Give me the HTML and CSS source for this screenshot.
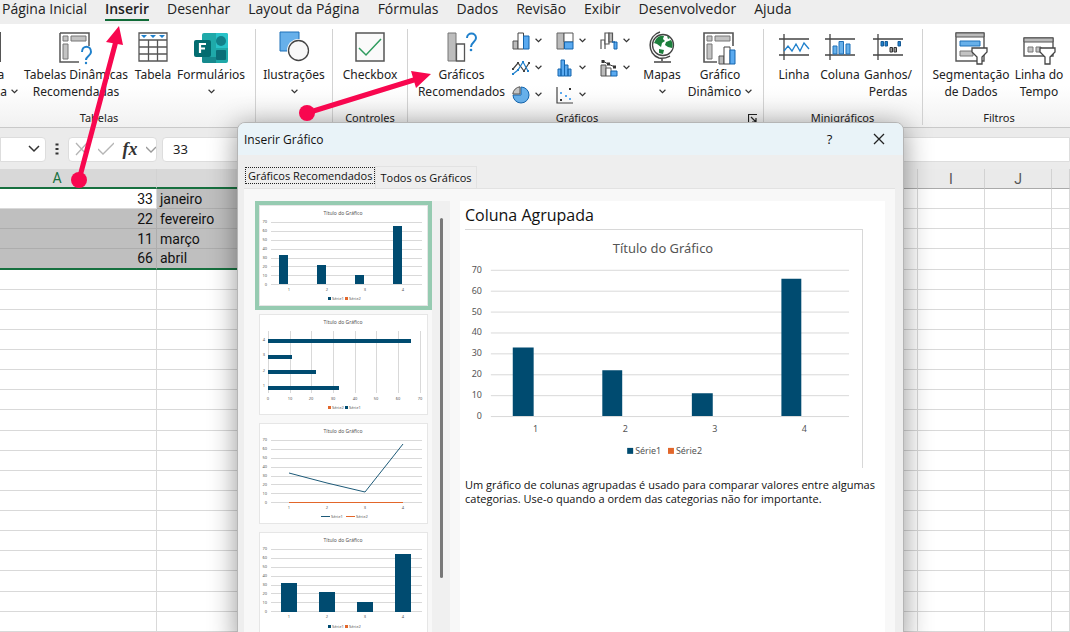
FILE: index.html
```html
<!DOCTYPE html>
<html lang="pt-BR">
<head>
<meta charset="utf-8">
<title>Inserir Gráfico</title>
<link rel="stylesheet" href="styles.css">
</head>
<body>
<div class="app">
  <nav class="tabs" aria-label="Guias">
    <button class="tab">Página Inicial</button>
    <button class="tab tab-active">Inserir</button>
    <button class="tab">Desenhar</button>
    <button class="tab">Layout da Página</button>
    <button class="tab">Fórmulas</button>
    <button class="tab">Dados</button>
    <button class="tab">Revisão</button>
    <button class="tab">Exibir</button>
    <button class="tab">Desenvolvedor</button>
    <button class="tab">Ajuda</button>
  </nav>

  <div class="ribbon">
    <section class="group group-tables">
      <div class="tools">
        <button class="tool">
          <svg class="icon" viewBox="0 0 30 30"><path d="M1 1h28v28H1z" fill="#fff" stroke="#555" stroke-width="2"/></svg>
          <span>Tabela</span><span>Dinâmica <svg class="chev" viewBox="0 0 6 4"><path d="M.5.5 3 3 5.500.5"/></svg></span>
        </button>
        <button class="tool">
          <svg class="icon icon-wide" viewBox="0 0 34 32"><path d="M1 1h29v13M20 30H1V1" fill="none" stroke="#555" stroke-width="1.500"/><path d="M4 4h5v5H4zM12 4h15v5H12zM4 12h5v15H4z" fill="#c3c3c3" stroke="#777"/><path d="M23 20c0-7 9-7 9 0 0 4-5 4-5 8" fill="none" stroke="#1f80cc" stroke-width="2"/><circle cx="27" cy="31" r="1.200" fill="#1f80cc"/></svg>
          <span>Tabelas Dinâmicas</span><span>Recomendadas</span>
        </button>
        <button class="tool">
          <svg class="icon" viewBox="0 0 30 30"><path d="M1 1h28v28H1z" fill="#fff"/><path d="M1 1h28v28H1zM1 8h28M1 15h28M1 22h28M10.500 8v21M19.500 8v21" fill="none" stroke="#555" stroke-width="1.300"/><path d="M3 3h6L6 6zM12 3h6l-3 3zM21 3h6l-3 3z" fill="#1f80cc"/></svg>
          <span>Tabela</span>
        </button>
        <button class="tool">
          <svg class="icon icon-wide" viewBox="0 0 34 30"><rect x="8" width="26" height="30" rx="2" fill="#1fa9a9"/><path d="M22 0h10a2 2 0 0 1 2 2v13H22z" fill="#28c3c9"/><circle cx="27" cy="8" r="5" fill="#12818a"/><rect x="22" y="17" width="10" height="10" rx="1" fill="#0b6e77"/><path d="M8 24h14v6H10a2 2 0 0 1-2-2z" fill="#16898d"/><rect y="7" width="17" height="17" rx="2" fill="#036c70"/><path d="M6 20v-9h6M6 15.500h5" fill="none" stroke="#fff" stroke-width="2.200"/></svg>
          <span>Formulários</span><span><svg class="chev" viewBox="0 0 6 4"><path d="M.5.5 3 3 5.500.5"/></svg></span>
        </button>
      </div>
      <div class="group-label">Tabelas</div>
    </section>

    <section class="group group-illus">
      <div class="tools">
        <button class="tool">
          <svg class="icon" viewBox="0 0 30 30"><path d="M1 0h19v19H1z" fill="#67b0ea" stroke="#1f70b8"/><circle cx="19.500" cy="18.500" r="11.500" fill="#fff"/><circle cx="19.500" cy="18.500" r="10" fill="#f8f8f8" stroke="#444" stroke-width="1.300"/></svg>
          <span>Ilustrações</span><span><svg class="chev" viewBox="0 0 6 4"><path d="M.5.5 3 3 5.500.5"/></svg></span>
        </button>
      </div>
    </section>

    <section class="group group-controls">
      <div class="tools">
        <button class="tool">
          <svg class="icon" viewBox="0 0 30 30"><path d="M1 1h28v28H1z" fill="#fafafa" stroke="#555" stroke-width="1.500"/><path d="m4 16 7 7L26 7" fill="none" stroke="#2f9b5e" stroke-width="1.500"/></svg>
          <span>Checkbox</span>
        </button>
      </div>
      <div class="group-label">Controles</div>
    </section>

    <section class="group group-charts">
      <div class="tools">
        <button class="tool">
          <svg class="icon" viewBox="0 0 30 30"><path d="M1 1h8v28H1z" fill="#bdbdbd" stroke="#777"/><path d="M9.500 12h8v17h-8z" fill="#fff" stroke="#555" stroke-width="1.300"/><path d="M20 6c0-6 9-6 9 0 0 4-5 4-5 9" fill="none" stroke="#1f80cc" stroke-width="2"/><circle cx="24" cy="18" r="1.300" fill="#1f80cc"/></svg>
          <span>Gráficos</span><span>Recomendados</span>
        </button>
        <div class="mini-grid">
          <button class="mini" aria-label="Colunas"><svg class="mini-icon" viewBox="0 0 18 18"><path d="M1 9h5v8H1z" fill="#bbb" stroke="#555"/><path d="M6 1h5.500v16H6z" fill="#fff" stroke="#444"/><path d="M11.500 4H17v13h-5.500z" fill="#5aaaf0" stroke="#1565ad"/></svg><svg class="chev" viewBox="0 0 6 4"><path d="M.5.5 3 3 5.500.5"/></svg></button>
          <button class="mini" aria-label="Hierarquia"><svg class="mini-icon" viewBox="0 0 18 18"><path d="M1 1h7v16H1z" fill="#bbb" stroke="#666"/><path d="M8 1h9v9H8z" fill="#fff" stroke="#555"/><path d="M8.500 10H17v7H8.500z" fill="#5aaaf0" stroke="#1565ad"/></svg><svg class="chev" viewBox="0 0 6 4"><path d="M.5.5 3 3 5.500.5"/></svg></button>
          <button class="mini" aria-label="Cascata"><svg class="mini-icon" viewBox="0 0 18 18"><path d="M1 17V8h4v9" fill="#fff" stroke="#555" stroke-width="1.200"/><path d="M5 1h4v11H5z" fill="#fff" stroke="#555" stroke-width="1.200"/><path d="M9 1h3.500v9H9z" fill="#bbb" stroke="#555" stroke-width="1.200"/><path d="M14 10h3v7h-3z" fill="#5aaaf0" stroke="#1565ad"/><path d="M12 10h3" stroke="#1565ad" stroke-width="1.500"/></svg><svg class="chev" viewBox="0 0 6 4"><path d="M.5.5 3 3 5.500.5"/></svg></button>
          <button class="mini" aria-label="Linhas"><svg class="mini-icon" viewBox="0 0 18 18"><path d="m1 10 5-6 6 8 5-8" fill="none" stroke="#444" stroke-width="1.200"/><path d="m1 15 5-4 5-8 5 9" fill="none" stroke="#1f80cc" stroke-width="1.200"/><path d="M0 9h2v2H0zM5 3h2v2H5zM11 11h2v2h-2zM16 3h2v2h-2z" fill="#444"/><path d="M0 14h2v2H0zM5 10h2v2H5zM10 2h2v2h-2zM15 11h2v2h-2z" fill="#1f80cc"/></svg><svg class="chev" viewBox="0 0 6 4"><path d="M.5.5 3 3 5.500.5"/></svg></button>
          <button class="mini" aria-label="Estatística"><svg class="mini-icon" viewBox="0 0 18 18"><path d="M2 10h3v7H2zM5 1h3.500v16H5zM8.500 6H12v11H8.500zM12 10h3v7h-3z" fill="#5aaaf0" stroke="#1565ad"/></svg><svg class="chev" viewBox="0 0 6 4"><path d="M.5.5 3 3 5.500.5"/></svg></button>
          <button class="mini" aria-label="Combinação"><svg class="mini-icon" viewBox="0 0 18 18"><path d="M1 6h5v11H1z" fill="#bbb" stroke="#555"/><path d="M6 9h5v8H6z" fill="#fff" stroke="#555"/><path d="M11 12h6v5h-6z" fill="#5aaaf0" stroke="#1565ad"/><path d="m3 2 5 3 7 3" fill="none" stroke="#333"/><path d="M1.500 1h3v3h-3zM7 3.500h3v3H7zM13 6.500h3v3h-3z" fill="#333"/></svg><svg class="chev" viewBox="0 0 6 4"><path d="M.5.5 3 3 5.500.5"/></svg></button>
          <button class="mini" aria-label="Pizza"><svg class="mini-icon" viewBox="0 0 18 18"><path d="M9 9V1a8 8 0 1 1-8 8z" fill="#67b0ea" stroke="#1565ad"/><path d="M8 8V.8A8 8 0 0 0 .8 8z" fill="#c5c5c5" stroke="#555"/></svg><svg class="chev" viewBox="0 0 6 4"><path d="M.5.5 3 3 5.500.5"/></svg></button>
          <button class="mini" aria-label="Dispersão"><svg class="mini-icon" viewBox="0 0 18 18"><path d="M1 1v16h16" fill="none" stroke="#444" stroke-width="1.200"/><path d="M13 2h2v2h-2zM4 13h2v2H4z" fill="#333"/><path d="M4 6h2v2H4zM9 9h2v2H9zM13 12h2v2h-2z" fill="#5aaaf0"/></svg><svg class="chev" viewBox="0 0 6 4"><path d="M.5.5 3 3 5.500.5"/></svg></button>
        </div>
        <button class="tool">
          <svg class="icon" viewBox="0 0 30 30"><circle cx="16" cy="13" r="10.500" fill="#fff" stroke="#444" stroke-width="1.300"/><path d="M9 7c2-3 6-4 8-3l-1 3 2 2-3 2-1 4-4-3-3-1zM19 10l5-2c2 3 2 6 1 8l-4-1-3-2zM12 17l5 1-1 4-4-1zM20 4l3 2-2 1z" fill="#1c7f3c"/><path d="M13 0C0 4 0 22 12 26c6 1 9-1 11-2M15 26v3M7 30h17" fill="none" stroke="#444" stroke-width="1.500"/></svg>
          <span>Mapas</span><span><svg class="chev" viewBox="0 0 6 4"><path d="M.5.5 3 3 5.500.5"/></svg></span>
        </button>
        <button class="tool">
          <svg class="icon icon-wide" viewBox="0 0 34 32"><path d="M30 14V1H1v29h13" fill="#fff" stroke="#555" stroke-width="1.600"/><path d="M4 4h5v5H4zM12 4h15v5H12zM4 12h5v15H4z" fill="#c3c3c3" stroke="#777"/><path d="M16 24h5v8h-5z" fill="#bbb" stroke="#555"/><path d="M21 15h6v17h-6z" fill="#fff" stroke="#444"/><path d="M27 18h5v14h-5z" fill="#5aaaf0" stroke="#1565ad"/></svg>
          <span>Gráfico</span><span>Dinâmico <svg class="chev" viewBox="0 0 6 4"><path d="M.5.5 3 3 5.500.5"/></svg></span>
        </button>
      </div>
      <div class="group-foot">
        <div class="group-label">Gráficos</div>
        <button class="launcher" aria-label="Mais gráficos"><svg viewBox="0 0 9 9"><path d="M.5 9V.5H9M3 3l5 5M8 4v4H4" fill="none" stroke="#222" stroke-width="1.200"/></svg></button>
      </div>
    </section>

    <section class="group group-spark">
      <div class="tools">
        <button class="tool">
          <svg class="icon" viewBox="0 0 30 30"><path d="M5 2v26M0 7h30M0 23h30" stroke="#444" stroke-width="1.300"/><path d="m5 19 4-5 4 5 4-7 4 7 4-8 5 6" fill="none" stroke="#1f80cc" stroke-width="1.300"/></svg>
          <span>Linha</span>
        </button>
        <button class="tool">
          <svg class="icon" viewBox="0 0 30 30"><path d="M5 2v26M0 7h30M0 23h30" stroke="#444" stroke-width="1.300"/><path d="M8 14h4v8H8zM14 9.500h4.500V22H14zM21 12h4v10h-4z" fill="#67b0ea" stroke="#1f70b8"/></svg>
          <span>Coluna</span>
        </button>
        <button class="tool">
          <svg class="icon" viewBox="0 0 30 30"><path d="M5 2v26M0 7h30M0 23h30" stroke="#444" stroke-width="1.300"/><path d="M8 9.500h2.500V14H8zM12 9.500h2.500V14H12zM25 9.500h2.500V14H25z" fill="#1f80cc" stroke="#165a96"/><path d="M17 15.500h2.500V20H17zM21 15.500h2.500V20H21z" fill="#999" stroke="#333"/></svg>
          <span>Ganhos/</span><span>Perdas</span>
        </button>
      </div>
      <div class="group-label">Minigráficos</div>
    </section>

    <section class="group group-filters">
      <div class="tools">
        <button class="tool">
          <svg class="icon icon-wide" viewBox="0 0 34 32"><path d="M2 1h28v28H2z" fill="#fff" stroke="#555" stroke-width="1.400"/><path d="M2 1h28v4H2z" fill="#bbb" stroke="#555"/><path d="M6 9h20v5H6z" fill="#67b0ea" stroke="#1f70b8"/><path d="M6 19h13v5H6z" fill="#c3c3c3" stroke="#777"/><path d="M18 16h15v4l-5 5v7h-5v-7l-5-5z" fill="#fff" stroke="#444" stroke-width="1.300"/></svg>
          <span>Segmentação</span><span>de Dados</span>
        </button>
        <button class="tool">
          <svg class="icon icon-wide" viewBox="0 0 34 32"><path d="M2 6h29v18H2z" fill="#fff" stroke="#555" stroke-width="1.400"/><path d="M2 6h29v4H2z" fill="#bbb" stroke="#555"/><path d="M6 15h5v5H6zM14 15h5v5h-5z" fill="#c3c3c3" stroke="#777"/><path d="M18 16h15v4l-5 5v7h-5v-7l-5-5z" fill="#fff" stroke="#444" stroke-width="1.300"/></svg>
          <span>Linha do</span><span>Tempo</span>
        </button>
      </div>
      <div class="group-label">Filtros</div>
    </section>
  </div>

  <div class="formula-bar">
    <button class="name-box" aria-label="Caixa de nome"><svg viewBox="0 0 12 8"><path d="m1 1 5 5 5-5" fill="none" stroke="#333" stroke-width="1.500"/></svg></button>
    <svg class="dots" viewBox="0 0 4 12"><path d="M.5.5h3v2h-3zM.5 5h3v2h-3zM.5 9.500h3v2h-3z" fill="#333"/></svg>
    <div class="fx-box">
      <button aria-label="Cancelar"><svg viewBox="0 0 16 14"><path d="m2 1 11 12M13 1 2 13" fill="none" stroke="#b5b5b5" stroke-width="1.300"/></svg></button>
      <button aria-label="Inserir"><svg viewBox="0 0 16 14"><path d="m0 7 5 5L16 1" fill="none" stroke="#b5b5b5" stroke-width="1.300"/></svg></button>
      <button class="fx">fx</button>
      <button class="fx-more" aria-label="Mais"><svg viewBox="0 0 10 14"><path d="m0 5 5 5 5-5" fill="none" stroke="#999" stroke-width="1.300"/></svg></button>
    </div>
    <input class="formula" aria-label="Barra de fórmulas" value="33">
  </div>

  <div class="sheet">
    <table>
      <colgroup><col class="col-a"><col class="col-b"><col class="col"><col class="col"><col class="col"><col class="col"><col class="col"><col class="col"><col class="col"><col class="col"><col></colgroup>
      <thead><tr><th class="picked"><span>A</span></th><th class="picked"></th><th></th><th></th><th></th><th></th><th></th><th></th><th>I</th><th>J</th><th></th></tr></thead>
      <tbody>
        <tr><td class="num">33</td><td class="sel">janeiro</td><td></td><td></td><td></td><td></td><td></td><td></td><td></td><td></td><td></td></tr>
        <tr><td class="num sel">22</td><td class="sel">fevereiro</td><td></td><td></td><td></td><td></td><td></td><td></td><td></td><td></td><td></td></tr>
        <tr><td class="num sel">11</td><td class="sel">março</td><td></td><td></td><td></td><td></td><td></td><td></td><td></td><td></td><td></td></tr>
        <tr><td class="num sel last">66</td><td class="sel last">abril</td><td></td><td></td><td></td><td></td><td></td><td></td><td></td><td></td><td></td></tr>
        <tr><td></td><td></td><td></td><td></td><td></td><td></td><td></td><td></td><td></td><td></td><td></td></tr>
        <tr><td></td><td></td><td></td><td></td><td></td><td></td><td></td><td></td><td></td><td></td><td></td></tr>
        <tr><td></td><td></td><td></td><td></td><td></td><td></td><td></td><td></td><td></td><td></td><td></td></tr>
        <tr><td></td><td></td><td></td><td></td><td></td><td></td><td></td><td></td><td></td><td></td><td></td></tr>
        <tr><td></td><td></td><td></td><td></td><td></td><td></td><td></td><td></td><td></td><td></td><td></td></tr>
        <tr><td></td><td></td><td></td><td></td><td></td><td></td><td></td><td></td><td></td><td></td><td></td></tr>
        <tr><td></td><td></td><td></td><td></td><td></td><td></td><td></td><td></td><td></td><td></td><td></td></tr>
        <tr><td></td><td></td><td></td><td></td><td></td><td></td><td></td><td></td><td></td><td></td><td></td></tr>
        <tr><td></td><td></td><td></td><td></td><td></td><td></td><td></td><td></td><td></td><td></td><td></td></tr>
        <tr><td></td><td></td><td></td><td></td><td></td><td></td><td></td><td></td><td></td><td></td><td></td></tr>
        <tr><td></td><td></td><td></td><td></td><td></td><td></td><td></td><td></td><td></td><td></td><td></td></tr>
        <tr><td></td><td></td><td></td><td></td><td></td><td></td><td></td><td></td><td></td><td></td><td></td></tr>
        <tr><td></td><td></td><td></td><td></td><td></td><td></td><td></td><td></td><td></td><td></td><td></td></tr>
        <tr><td></td><td></td><td></td><td></td><td></td><td></td><td></td><td></td><td></td><td></td><td></td></tr>
        <tr><td></td><td></td><td></td><td></td><td></td><td></td><td></td><td></td><td></td><td></td><td></td></tr>
        <tr><td></td><td></td><td></td><td></td><td></td><td></td><td></td><td></td><td></td><td></td><td></td></tr>
        <tr><td></td><td></td><td></td><td></td><td></td><td></td><td></td><td></td><td></td><td></td><td></td></tr>
        <tr><td></td><td></td><td></td><td></td><td></td><td></td><td></td><td></td><td></td><td></td><td></td></tr>
      </tbody>
    </table>
  </div>
</div>

<div class="dialog" role="dialog" aria-label="Inserir Gráfico">
  <header class="dialog-head">
    <span class="dialog-title">Inserir Gráfico</span>
    <button class="head-btn">?</button>
    <button class="head-btn" aria-label="Fechar"><svg viewBox="0 0 12 12"><path d="m1 1 10 10M11 1 1 11" stroke="#222" stroke-width="1.300"/></svg></button>
  </header>
  <div class="dialog-tabs">
    <button class="dtab dtab-active">Gráficos Recomendados</button>
    <button class="dtab">Todos os Gráficos</button>
  </div>
  <div class="panel">
    <div class="list">
      <button class="thumb thumb-active">
        <svg viewBox="0 0 169 101"><path class="grid" d="M12 17.500h151M12 26.500h151M12 35.500h151M12 44.500h151M12 53.500h151M12 61.500h151M12 70.500h151M12 79.500h151"/>
          <text class="t" x="84" y="10">Título do Gráfico</text>
          <g class="end"><text x="8" y="18">70</text><text x="8" y="27">60</text><text x="8" y="36">50</text><text x="8" y="45">40</text><text x="8" y="54">30</text><text x="8" y="63">20</text><text x="8" y="72">10</text><text x="8" y="81">0</text></g>
          <path class="s1" d="M20 50h9v29h-9zM58 60h9v19h-9zM96 70h9v9h-9zM134 21h9v58h-9z"/>
          <g class="mid"><text x="30" y="86">1</text><text x="68" y="86">2</text><text x="106" y="86">3</text><text x="144" y="86">4</text></g>
          <path class="s1" d="M69 92h3v3h-3z"/><path class="s2" d="M86 92h3v3h-3z"/><text x="73" y="95">Série1</text><text x="90" y="95">Série2</text></svg>
      </button>
      <button class="thumb">
        <svg viewBox="0 0 169 101"><path class="grid" d="M9.500 17v62M31.500 17v62M52.500 17v62M74.500 17v62M96.500 17v62M117.500 17v62M139.500 17v62M161.500 17v62"/>
          <text class="t" x="84" y="10">Título do Gráfico</text>
          <g class="end"><text x="6" y="27">4</text><text x="6" y="42">3</text><text x="6" y="58">2</text><text x="6" y="73">1</text></g>
          <path class="s1" d="M9 25h143v4H9zM9 41h24v4H9zM9 56h48v4H9zM9 72h71v4H9z"/>
          <g class="mid"><text x="9" y="86">0</text><text x="31" y="86">10</text><text x="52" y="86">20</text><text x="74" y="86">30</text><text x="96" y="86">40</text><text x="117" y="86">50</text><text x="139" y="86">60</text><text x="161" y="86">70</text></g>
          <path class="s2" d="M69 92h3v3h-3z"/><path class="s1" d="M86 92h3v3h-3z"/><text x="73" y="95">Série2</text><text x="90" y="95">Série1</text></svg>
      </button>
      <button class="thumb">
        <svg viewBox="0 0 169 101"><path class="grid" d="M12 17.500h151M12 26.500h151M12 35.500h151M12 44.500h151M12 53.500h151M12 61.500h151M12 70.500h151M12 79.500h151"/>
          <text class="t" x="84" y="10">Título do Gráfico</text>
          <g class="end"><text x="8" y="18">70</text><text x="8" y="27">60</text><text x="8" y="36">50</text><text x="8" y="45">40</text><text x="8" y="54">30</text><text x="8" y="63">20</text><text x="8" y="72">10</text><text x="8" y="81">0</text></g>
          <path class="line1" d="m30 50 38 10 38 9 38-48"/><path class="s2" d="M30 79h114v1H30z"/>
          <g class="mid"><text x="30" y="86">1</text><text x="68" y="86">2</text><text x="106" y="86">3</text><text x="144" y="86">4</text></g>
          <path class="line1" d="M62 93.500h9"/><path class="line2" d="M87 93.500h9"/><text x="72" y="95">Série1</text><text x="97" y="95">Série2</text></svg>
      </button>
      <button class="thumb">
        <svg viewBox="0 0 169 101"><path class="grid" d="M12 17.500h151M12 26.500h151M12 35.500h151M12 44.500h151M12 53.500h151M12 61.500h151M12 70.500h151M12 79.500h151"/>
          <text class="t" x="84" y="10">Título do Gráfico</text>
          <g class="end"><text x="8" y="18">70</text><text x="8" y="27">60</text><text x="8" y="36">50</text><text x="8" y="45">40</text><text x="8" y="54">30</text><text x="8" y="63">20</text><text x="8" y="72">10</text><text x="8" y="81">0</text></g>
          <path class="s1" d="M22 51h16v29H22zM60 60h16v20H60zM98 70h16v10H98zM136 22h16v58h-16z"/>
          <g class="mid"><text x="30" y="86">1</text><text x="68" y="86">2</text><text x="106" y="86">3</text><text x="144" y="86">4</text></g>
          <path class="s1" d="M69 93h3v3h-3z"/><path class="s2" d="M86 93h3v3h-3z"/><text x="73" y="96">Série1</text><text x="90" y="96">Série2</text></svg>
      </button>
    </div>
    <div class="scroll"><div class="scroll-thumb"></div></div>
    <div class="preview">
      <h2>Coluna Agrupada</h2>
      <svg class="chart" viewBox="0 0 399 239">
        <path class="grid" d="M26 40.500h360M26 61.500h360M26 82.500h360M26 103.500h360M26 124.500h360M26 145.500h360M26 166.500h360M26 187.500h360"/>
        <text class="t" x="199" y="23">Título do Gráfico</text>
        <g class="end"><text x="17" y="43">70</text><text x="17" y="64">60</text><text x="17" y="85">50</text><text x="17" y="106">40</text><text x="17" y="127">30</text><text x="17" y="148">20</text><text x="17" y="169">10</text><text x="17" y="190">0</text></g>
        <path class="s1" d="M48 118h21v69H48zM138 141h20v46h-20zM228 164h21v23h-21zM318 49h20v138h-20z"/>
        <g class="mid"><text x="71" y="203">1</text><text x="161" y="203">2</text><text x="251" y="203">3</text><text x="341" y="203">4</text></g>
        <path class="s1" d="M163 219h6v6h-6z"/><path class="s2" d="M204 219h6v6h-6z"/>
        <text x="171" y="225">Série1</text><text x="212" y="225">Série2</text>
      </svg>
      <p>Um gráfico de colunas agrupadas é usado para comparar valores entre algumas categorias. Use-o quando a ordem das categorias não for importante.</p>
    </div>
  </div>
</div>

<svg class="arrows" viewBox="0 0 440 200" aria-hidden="true">
  <path d="M79 180 116 41M307 113l110-34" fill="none" stroke="#f8074f" stroke-width="5"/>
  <path d="m119 26-13 16 17 3zM431 74l-20-3 5 17z" fill="#f8074f"/>
  <circle cx="79" cy="180" r="8" fill="#f8074f"/><circle cx="307" cy="113" r="8" fill="#f8074f"/>
</svg>
</body>
</html>
```
FILE: styles.css
```css
* { box-sizing: border-box; }
body {
  margin: 0;
  height: 100vh;
  overflow: hidden;
  position: relative;
  font-family: "Noto Sans", "Open Sans", sans-serif;
  font-size: 12px;
  color: #222;
  background: #ececec;
}
button, input {
  margin: 0;
  padding: 0;
  border: 0;
  background: none;
  font: inherit;
  color: inherit;
}
svg { display: block; }
.app { display: flex; flex-direction: column; height: 100%; }

.tabs {
  display: flex;
  gap: 18px;
  height: 24px;
  padding: 0 2px;
  background: #eee;
  font-family: "Open Sans", "Noto Sans", sans-serif;
  font-size: 14px;
}
.tab { height: 21px; line-height: 17px; padding-bottom: 4px; white-space: nowrap; flex: none; }
.tab-active { font-weight: 600; border-bottom: 2px solid #0f6b37; padding-bottom: 2px; }

.ribbon {
  display: flex;
  height: 104px;
  flex: none;
  background: linear-gradient(#fff 60%, #f1f1f1);
  border-bottom: 1px solid #c9c9c9;
}
.group {
  display: flex;
  flex-direction: column;
  justify-content: space-between;
  flex: none;
  margin: 5px 0 2px;
  padding-top: 3px;
  border-right: 1px solid #d2d2d2;
}
.group-tables { width: 305px; margin-left: -49px; padding-right: 8px; }
.group-illus { width: 77px; }
.group-controls { width: 75px; }
.group-charts { width: 356px; padding: 3px 6px 0 9px; }
.group-spark { width: 159px; padding-left: 7px; padding-right: 8px; }
.group-filters { width: 153px; padding-left: 5px; padding-right: 6px; border-right: 0; }
.tools { display: grid; align-items: start; }
.group-tables .tools { grid-template-columns: 70px 110px 44px 72px; }
.group-charts .tools { grid-template-columns: 89px 132px 48px 68px; }
.group-spark .tools { grid-template-columns: 46px 46px 50px; }
.group-filters .tools { grid-template-columns: 86px 50px; }
.tool {
  display: flex;
  flex-direction: column;
  align-items: center;
  line-height: 17px;
  white-space: nowrap;
  min-width: 0;
}
.tool span { display: flex; align-items: center; gap: 4px; min-height: 17px; }
.icon { width: 30px; height: 30px; margin-bottom: 4px; overflow: visible; }
.icon-wide { width: 34px; height: 32px; margin-bottom: 2px; }
.chev { width: 7px; height: 5px; fill: none; stroke: #333; stroke-width: 1; }
.group-label { font-size: 11px; line-height: 14px; text-align: center; }
.group-foot { display: grid; grid-template-columns: 1fr 20px; align-items: center; }
.launcher { width: 9px; height: 9px; justify-self: end; }
.mini-grid {
  display: grid;
  grid-template-columns: repeat(3, 44px);
  grid-auto-rows: 27px;
  padding-left: 6px;
  margin-top: -5px;
}
.mini { display: flex; align-items: center; gap: 5px; }
.mini-icon { width: 18px; height: 18px; }

.formula-bar {
  display: flex;
  align-items: center;
  height: 41px;
  flex: none;
  padding: 1px 0 0;
  background: #ebebeb;
}
.name-box {
  display: flex;
  align-items: center;
  justify-content: flex-end;
  width: 46px;
  height: 25px;
  padding-right: 5px;
  background: #fff;
  border: 1px solid #ddd;
  border-radius: 0 4px 4px 0;
}
.name-box svg { width: 12px; height: 8px; }
.dots { width: 4px; height: 12px; margin: 0 9px; }
.fx-box {
  display: flex;
  align-items: center;
  gap: 8px;
  width: 89px;
  height: 25px;
  padding: 0 0 0 5px;
  background: #fff;
  border: 1px solid #ddd;
  border-radius: 4px;
}
.fx-box button { flex: none; width: 16px; }
.fx-box svg { width: 100%; height: 14px; }
.fx-box .fx { font: italic 700 18px/20px "Liberation Serif", serif; color: #333; }
.fx-box .fx-more { width: 10px; }
.formula {
  flex: 1;
  min-width: 0;
  height: 25px;
  margin-left: 5px;
  padding-left: 10px;
  background: #fff;
  border: 1px solid #ddd;
  border-radius: 4px 0 0 4px;
  font-size: 13px;
}

.sheet { flex: 1; min-height: 0; background: #fff; font-family: Roboto, "Noto Sans", sans-serif; font-size: 14px; }
table { width: 100%; height: 100%; table-layout: fixed; border-collapse: separate; border-spacing: 0; }
.col-a { width: 157px; }
.col-b { width: 359px; }
.col { width: 67px; }
tr { height: 20px; }
th {
  height: 20px;
  padding: 0;
  line-height: 16px;
  background: #eaeaea;
  border-right: 1px solid #d2d2d2;
  border-bottom: 1px solid #aaa;
  font-weight: 400;
  color: #555;
}
.picked { background: #d8d8d8; border-bottom: 2px solid #17703f; color: #17703f; }
.picked span { padding-right: 42px; }
td {
  height: 20px;
  padding: 0 3px;
  line-height: 16px;
  border-right: 1px solid #d9d9d9;
  border-bottom: 1px solid #d9d9d9;
  color: #111;
}
.num { text-align: right; }
.sel { background: #bfbfbf; border-color: #adadad; }
.last { border-bottom: 2px solid #17703f; }

.dialog {
  position: absolute;
  top: 122px;
  left: 237px;
  right: 166px;
  bottom: -12px;
  display: flex;
  flex-direction: column;
  overflow: hidden;
  background: #eee;
  border: 1px solid #b5b5b5;
  border-radius: 8px 8px 0 0;
  box-shadow: 0 4px 28px rgba(0, 0, 0, .42);
  font-family: "Open Sans", "Noto Sans", sans-serif;
}
.dialog-head {
  display: flex;
  align-items: center;
  gap: 24px;
  height: 32px;
  flex: none;
  padding: 0 12px 0 6px;
  background: #e9f3f8;
  color: #111;
}
.dialog-title { flex: 1; }
.head-btn { width: 25px; display: flex; justify-content: center; font-size: 13px; }
.head-btn svg { width: 12px; height: 12px; }
.dialog-tabs { display: flex; align-items: flex-end; height: 33px; flex: none; padding: 0 7px; font-size: 11px; color: #111; }
.dtab { height: 22px; padding: 0 4px; border: 1px solid #e2e2e2; border-bottom: 0; line-height: 20px; white-space: nowrap; }
.dtab-active { height: 17px; margin-bottom: 4px; padding: 0 2px; border: 1px dotted #222; line-height: 14px; }
.panel {
  display: flex;
  flex: 1;
  min-height: 0;
  margin: 0 8px 0 6px;
  padding: 12px 10px 0 11px;
  background: #f8f8f8;
  border-top: 1px solid #e2e2e2;
}
.list { width: 177px; flex: none; overflow: hidden; }
.thumb { display: block; width: 100%; padding: 0; border: 4px solid transparent; }
.thumb svg { width: 100%; height: auto; background: #fff; outline: 1px solid #e6e6e6; outline-offset: -1px; }
.thumb-active { border-color: #96cbb1; }
.scroll { width: 18px; flex: none; display: flex; justify-content: center; padding-top: 17px; background: #f0f0f0; }
.scroll-thumb { width: 3px; height: 360px; border-radius: 2px; background: #777; }
.preview { flex: 1; min-width: 0; margin-left: 10px; padding: 0 22px 0 5px; background: #fff; }
h2 { margin: 0; font-size: 16px; line-height: 28px; font-weight: 400; color: #111; }
.chart { width: 100%; border-top: 1px solid #d8d8d8; border-right: 1px solid #d8d8d8; }
.preview p { margin: 10px -20px 0 0; font-size: 11px; line-height: 14px; color: #111; }

svg text { font-family: "Noto Sans", sans-serif; font-size: 9px; fill: #555; }
.thumb text { font-size: 4px; }
.chart .t { font-size: 13px; text-anchor: middle; }
.thumb .t { font-size: 5px; text-anchor: middle; }
.end { text-anchor: end; }
.mid { text-anchor: middle; }
.grid { fill: none; stroke: #d9d9d9; stroke-width: 1; }
.s1 { fill: #004b70; }
.s2 { fill: #e2662a; }
.line1 { fill: none; stroke: #1d5a78; stroke-width: 1; }
.line2 { fill: none; stroke: #e2662a; stroke-width: 1; }

.arrows { position: absolute; top: 0; left: 0; width: 440px; height: 200px; pointer-events: none; }
```
